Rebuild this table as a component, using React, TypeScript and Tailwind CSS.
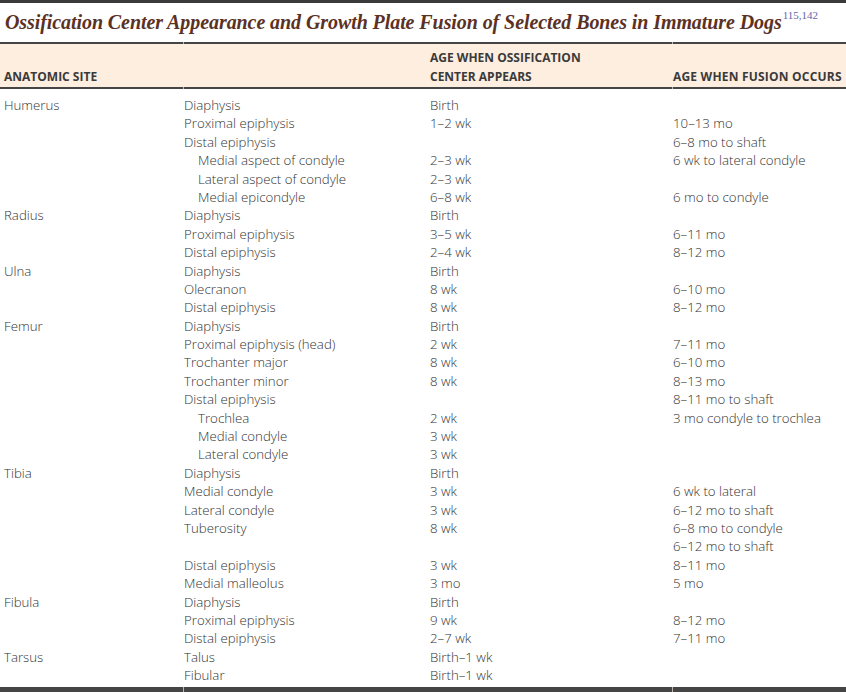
import React from 'react';

type Row = { site?: string; part?: string; indent?: boolean; appears?: string; fusion?: string };

const rows: Row[] = [
  { site: 'Humerus', part: 'Diaphysis', appears: 'Birth' },
  { part: 'Proximal epiphysis', appears: '1–2 wk', fusion: '10–13 mo' },
  { part: 'Distal epiphysis', fusion: '6–8 mo to shaft' },
  { part: 'Medial aspect of condyle', indent: true, appears: '2–3 wk', fusion: '6 wk to lateral condyle' },
  { part: 'Lateral aspect of condyle', indent: true, appears: '2–3 wk' },
  { part: 'Medial epicondyle', indent: true, appears: '6–8 wk', fusion: '6 mo to condyle' },
  { site: 'Radius', part: 'Diaphysis', appears: 'Birth' },
  { part: 'Proximal epiphysis', appears: '3–5 wk', fusion: '6–11 mo' },
  { part: 'Distal epiphysis', appears: '2–4 wk', fusion: '8–12 mo' },
  { site: 'Ulna', part: 'Diaphysis', appears: 'Birth' },
  { part: 'Olecranon', appears: '8 wk', fusion: '6–10 mo' },
  { part: 'Distal epiphysis', appears: '8 wk', fusion: '8–12 mo' },
  { site: 'Femur', part: 'Diaphysis', appears: 'Birth' },
  { part: 'Proximal epiphysis (head)', appears: '2 wk', fusion: '7–11 mo' },
  { part: 'Trochanter major', appears: '8 wk', fusion: '6–10 mo' },
  { part: 'Trochanter minor', appears: '8 wk', fusion: '8–13 mo' },
  { part: 'Distal epiphysis', fusion: '8–11 mo to shaft' },
  { part: 'Trochlea', indent: true, appears: '2 wk', fusion: '3 mo condyle to trochlea' },
  { part: 'Medial condyle', indent: true, appears: '3 wk' },
  { part: 'Lateral condyle', indent: true, appears: '3 wk' },
  { site: 'Tibia', part: 'Diaphysis', appears: 'Birth' },
  { part: 'Medial condyle', appears: '3 wk', fusion: '6 wk to lateral' },
  { part: 'Lateral condyle', appears: '3 wk', fusion: '6–12 mo to shaft' },
  { part: 'Tuberosity', appears: '8 wk', fusion: '6–8 mo to condyle' },
  { fusion: '6–12 mo to shaft' },
  { part: 'Distal epiphysis', appears: '3 wk', fusion: '8–11 mo' },
  { part: 'Medial malleolus', appears: '3 mo', fusion: '5 mo' },
  { site: 'Fibula', part: 'Diaphysis', appears: 'Birth' },
  { part: 'Proximal epiphysis', appears: '9 wk', fusion: '8–12 mo' },
  { part: 'Distal epiphysis', appears: '2–7 wk', fusion: '7–11 mo' },
  { site: 'Tarsus', part: 'Talus', appears: 'Birth–1 wk' },
  { part: 'Fibular', appears: 'Birth–1 wk' },
];

function Rule({ h }: { h: string }) {
  return (
    <div className="flex gap-px bg-[#b9b4ae]">
      <div className={`w-[183px] ${h} bg-[#454545]`} />
      <div className={`w-[488px] ${h} bg-[#454545]`} />
      <div className={`flex-1 ${h} bg-[#454545]`} />
    </div>
  );
}

export default function App() {
  return (
    <div className="w-[846px] h-[692px] overflow-hidden bg-white text-[#333] font-['Open_Sans',sans-serif]">
      <div className="h-[3px] bg-[#3a3a3a]" />
      <h1 className="h-[39px] pl-[5px] pt-[9px] font-['Liberation_Serif',serif] italic font-bold text-[20px] leading-[20px] tracking-[-0.08px] text-[#5b3124] whitespace-nowrap">
        Ossification Center Appearance and Growth Plate Fusion of Selected Bones in Immature Dogs
        <sup className="ml-[1px] text-[11px] font-normal not-italic tracking-normal text-[#6466a6] align-[5px]">115,142</sup>
      </h1>
      <Rule h="h-[2px]" />
      <div className="flex items-end h-[43px] bg-[#fdeee0] pb-[1px] text-[12px] font-bold leading-[18.5px] text-[#3a3a3a]">
        <div className="w-[184px] pl-[4px]">ANATOMIC SITE</div>
        <div className="w-[246px]" />
        <div className="w-[243px]">
          AGE WHEN OSSIFICATION
          <br />
          CENTER APPEARS
        </div>
        <div className="flex-1 tracking-[0.2px]">AGE WHEN FUSION OCCURS</div>
      </div>
      <Rule h="h-[2px]" />
      <div className="pt-[7px] pb-[2px] text-[13.25px] font-light leading-[18.4px]">
        {rows.map((r, i) => (
          <div key={i} className="flex h-[18.4px] whitespace-nowrap">
            <div className="w-[184px] pl-[4px]">{r.site}</div>
            <div className={`w-[246px] ${r.indent ? 'pl-[14px]' : ''}`}>{r.part}</div>
            <div className="w-[243px]">{r.appears}</div>
            <div className="flex-1">{r.fusion}</div>
          </div>
        ))}
      </div>
      <Rule h="h-[5px]" />
    </div>
  );
}
